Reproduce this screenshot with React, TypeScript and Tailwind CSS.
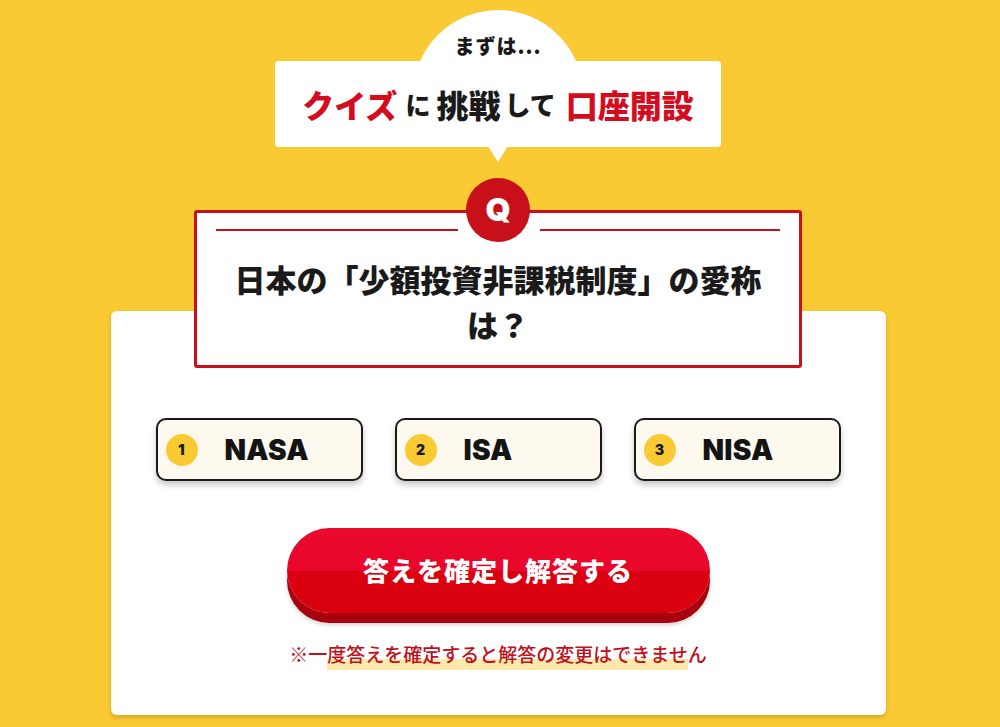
import React from "react";

const JP = "font-['Noto_Sans_CJK_JP','Noto_Sans',sans-serif]";

const CHOICES = [
  { no: 1, label: "NASA" },
  { no: 2, label: "ISA" },
  { no: 3, label: "NISA" },
];

export default function App() {
  return (
    <div className={`min-h-screen bg-[#f9ca33] ${JP}`}>
      <div className="flex flex-col items-center pr-[4px]">
        {/* 吹き出し見出し */}
        <div className="relative mt-[61px] h-[86px] w-[446px] rounded-[4px] bg-white">
          <div className="absolute left-1/2 top-[-51px] h-[52px] w-[170px] -translate-x-1/2 overflow-hidden">
            <div className="h-[170px] w-[170px] rounded-full bg-white" />
          </div>
          <div className="absolute left-1/2 top-[85px] h-0 w-0 -translate-x-1/2 border-l-[10px] border-r-[10px] border-t-[16px] border-l-transparent border-r-transparent border-t-white" />
          <div className="absolute left-0 right-0 top-[-25px] text-center text-[20px] font-black leading-none tracking-[1px] text-[#1a1a1a]">
            まずは...
          </div>
          <div className="relative flex h-full items-center justify-center font-black leading-none">
            <span className="text-[32px] text-[#d40d1e]">クイズ</span>
            <span className="ml-[8px] text-[25px] text-[#1a1a1a]">に</span>
            <span className="ml-[6px] text-[32px] text-[#1a1a1a]">挑戦</span>
            <span className="ml-[4px] text-[26px] text-[#1a1a1a]">して</span>
            <span className="ml-[10px] text-[32px] text-[#d40d1e]">口座開設</span>
          </div>
        </div>

        {/* 問題ボックス */}
        <div className="relative z-10 mt-[63px] w-[608px] rounded-[3px] border-[3px] border-[#c8101a] bg-white px-[30px] pb-[19px] pt-[43px] text-center">
          <div className="absolute left-[19px] top-[16px] h-[2px] w-[242px] bg-[#c8101a]" />
          <div className="absolute right-[19px] top-[16px] h-[2px] w-[240px] bg-[#c8101a]" />
          <div className="absolute left-1/2 top-[-35px] flex h-[64px] w-[64px] -translate-x-1/2 items-center justify-center rounded-full bg-[#c8101a] font-['Inter',sans-serif] text-[32px] font-black text-white">
            Q
          </div>
          <p className="text-[31px] font-black leading-[45px] text-[#1a1a1a]">
            日本の「少額投資非課税制度」の愛称
            <br />
            は？
          </p>
        </div>

        {/* 回答カード */}
        <div className="-mt-[57px] mb-[10px] flex w-[775px] flex-col items-center rounded-[6px] bg-white pb-[52px] pt-[107px] shadow-[0_3px_4px_rgba(120,80,0,0.25)]">
          <div className="flex gap-[32px]">
            {CHOICES.map((c) => (
              <div
                key={c.no}
                className="flex h-[63px] w-[207px] items-center rounded-[10px] border-2 border-[#1a1a1a] bg-[#fdf9ee] pl-[8px] shadow-[0_4px_6px_rgba(0,0,0,0.22)]"
              >
                <span className="flex h-[32px] w-[32px] items-center justify-center rounded-full bg-[#f9ca33] font-['Inter',sans-serif] text-[14px] font-black text-[#1a1a1a]">
                  {c.no}
                </span>
                <span className="ml-[27px] font-['Inter',sans-serif] text-[28px] font-black tracking-[0.3px] text-[#141414]">
                  {c.label}
                </span>
              </div>
            ))}
          </div>

          <button className="mt-[47px] flex h-[85px] w-[423px] items-center justify-center rounded-full bg-[linear-gradient(180deg,#ea0a2e_0%,#e8062a_51%,#da0010_51%,#d9000e_100%)] pb-[2px] text-[26px] font-black tracking-[1px] text-white shadow-[0_10px_0_#a8000e,0_12px_4px_rgba(0,0,0,0.18)]">
            答えを確定し解答する
          </button>

          <p className="mt-[31px] text-[19px] font-medium leading-none text-[#c0101c]">
            ※一
            <span className="bg-[linear-gradient(180deg,transparent_64%,#fde9ac_64%)] pb-[3px]">
              度答えを確定すると解答の変更はできませ
            </span>
            ん
          </p>
        </div>
      </div>
    </div>
  );
}
